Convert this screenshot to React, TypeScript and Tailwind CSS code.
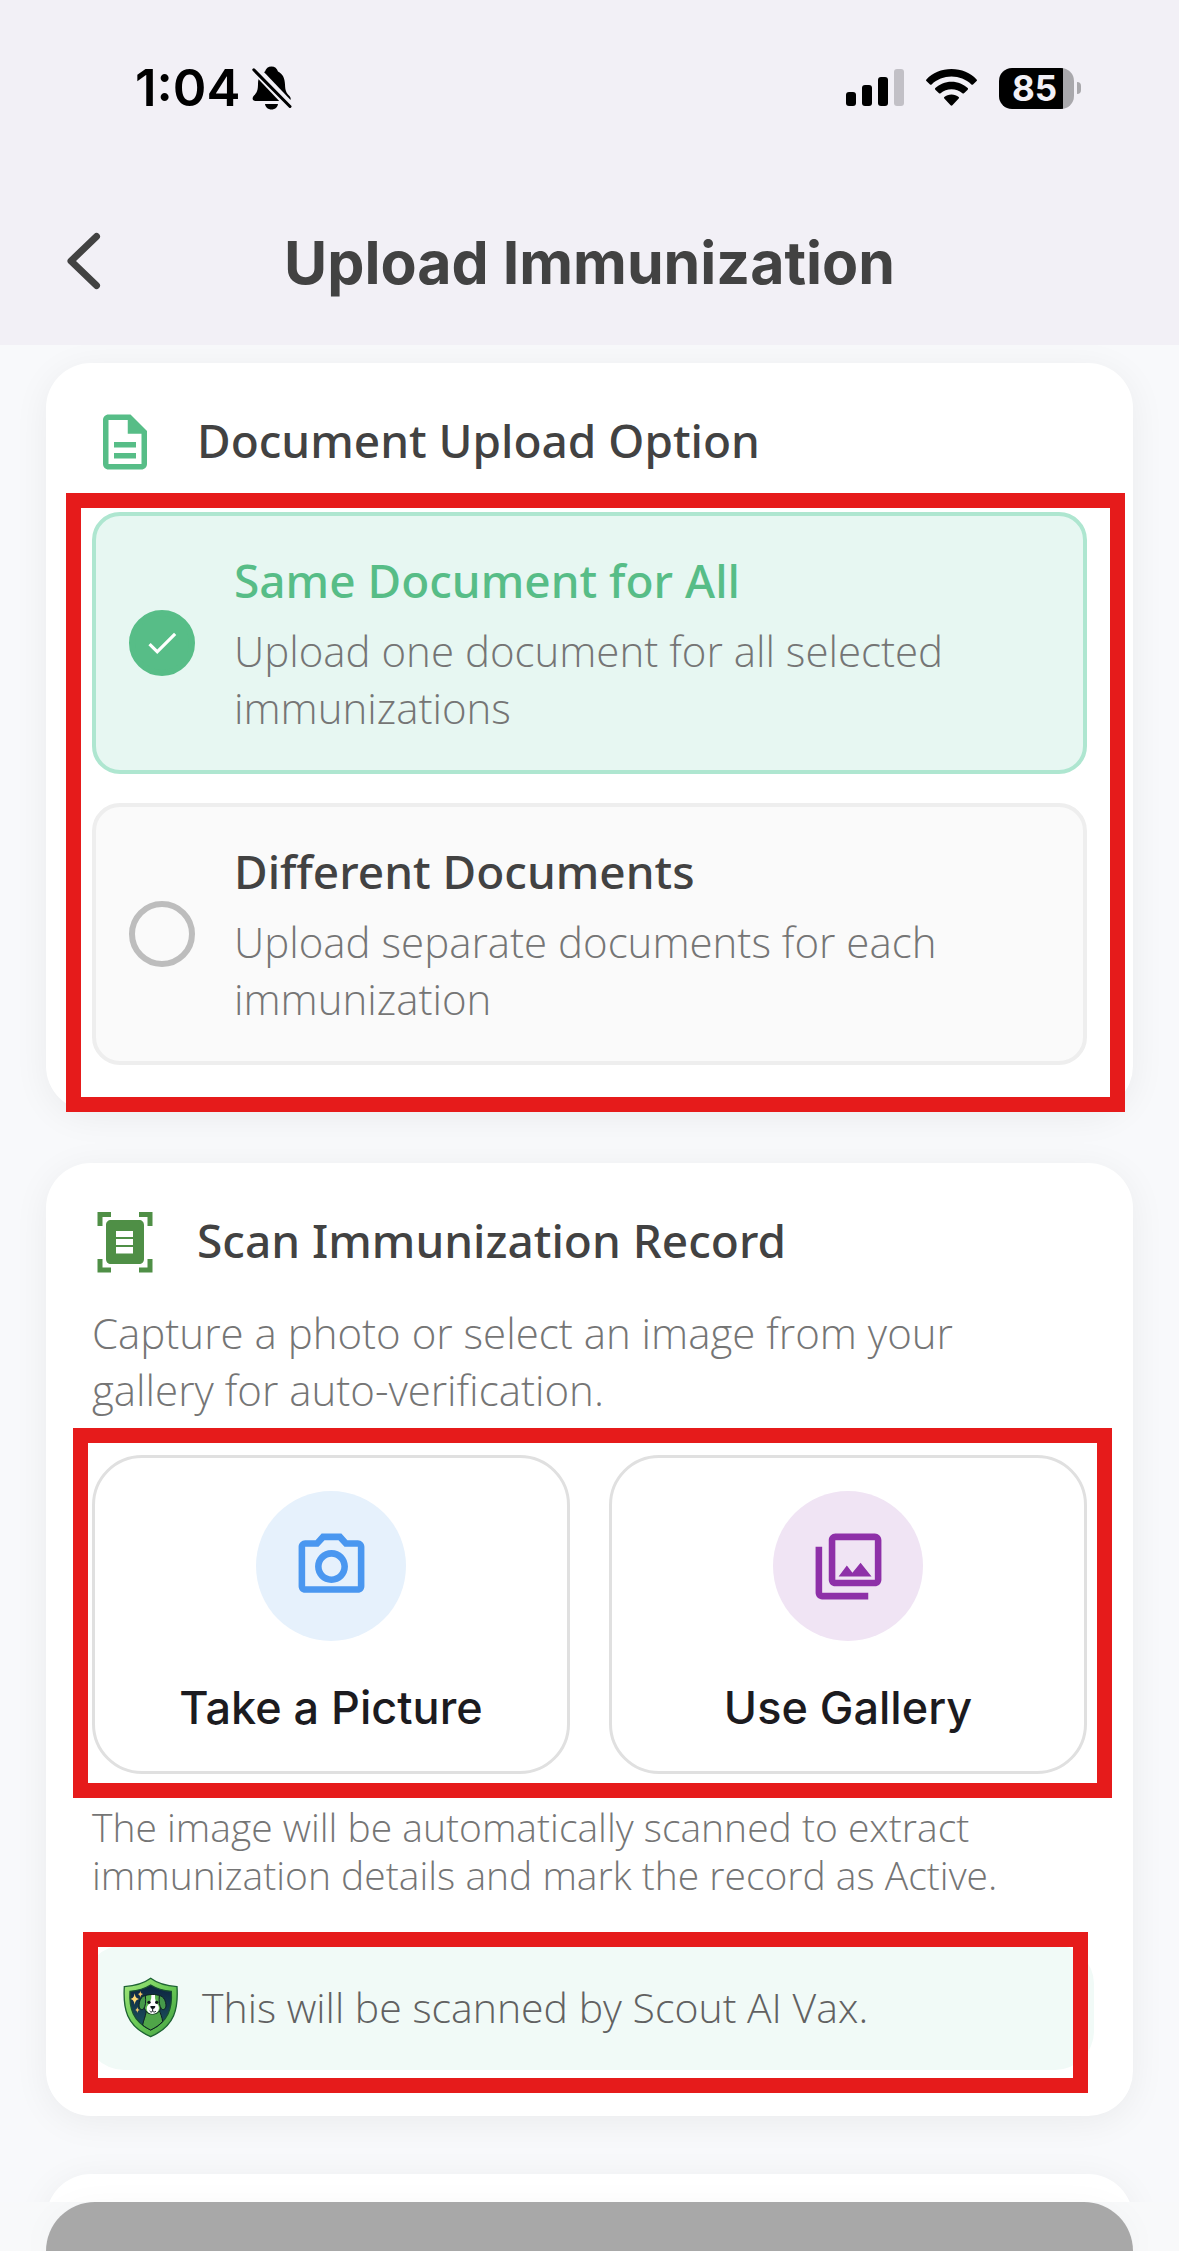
import React, { useState } from 'react'
import {
  MdCheck,
  MdOutlineDescription,
  MdOutlinePhotoCamera,
  MdOutlinePhotoLibrary,
} from 'react-icons/md'

type UploadOption = {
  id: string
  title: string
  description: string
}

const uploadOptions: UploadOption[] = [
  {
    id: 'same',
    title: 'Same Document for All',
    description: 'Upload one document for all selected immunizations',
  },
  {
    id: 'different',
    title: 'Different Documents',
    description: 'Upload separate documents for each immunization',
  },
]

function BellOffIcon() {
  return (
    <svg width="40" height="44" viewBox="0 0 40 44" fill="none" aria-hidden="true">
      <path
        d="M13 5.600C14 2.300 16.200 0.400 19.500 0.400C22.800 0.400 25 2.300 26 5.600C30.800 8 32.800 12.500 33 18.500C33.200 25 34.500 27.200 37.200 29.800C39.600 32.200 39 35 36 35H3.600C0.400 35 -0.400 32 2 29.600C5 26.600 6 24 6 17.500C6.200 12 8.400 8 13 5.600Z"
        fill="#000"
      />
      <path d="M13 38H26C25.500 41.400 23 43.500 19.500 43.500C16 43.500 13.500 41.400 13 38Z" fill="#000" />
      <path d="M0 0L42 44" stroke="#f2f0f6" strokeWidth="9" />
      <path d="M1.800 3.800L38 40.500" stroke="#000" strokeWidth="3" strokeLinecap="round" />
    </svg>
  )
}

function SignalIcon() {
  return (
    <svg width="58" height="38" viewBox="0 0 58 38" aria-hidden="true">
      <rect x="0" y="23" width="10" height="14" rx="3" />
      <rect x="16" y="16" width="10" height="21" rx="3" />
      <rect x="32" y="8" width="10" height="29" rx="3" />
      <rect x="48" y="0" width="10" height="37" rx="3" fill="#c2c0c6" />
    </svg>
  )
}

function WifiIcon() {
  return (
    <svg width="51" height="38" viewBox="0 0 51 38" aria-hidden="true">
      <path d="M25.500 0C35.500 0 44.500 4 50.600 10.400C51.100 10.900 51.100 11.500 50.600 12L47 15.400C46.500 15.900 45.900 15.900 45.400 15.400C40 10.300 33 7.500 25.500 7.500C18 7.500 11 10.300 5.600 15.400C5.100 15.900 4.500 15.900 4 15.400L0.400 12C-0.100 11.500 -0.100 10.900 0.400 10.400C6.500 4 15.500 0 25.500 0Z" />
      <path d="M25.500 12.700C32 12.700 37.500 15.200 41.700 19.100C42.200 19.600 42.200 20.200 41.700 20.700L38 24.200C37.500 24.700 36.900 24.700 36.400 24.200C33.300 21.600 29.600 20.200 25.500 20.200C21.400 20.200 17.700 21.600 14.600 24.200C14.100 24.700 13.500 24.700 13 24.200L9.300 20.700C8.800 20.200 8.800 19.600 9.300 19.100C13.500 15.200 19 12.700 25.500 12.700Z" />
      <path d="M25.500 25.500C28.300 25.500 30.800 26.400 32.700 28C33.200 28.500 33.200 29.100 32.700 29.600L26.400 36.300C25.800 36.900 25.200 36.900 24.600 36.300L18.300 29.600C17.800 29.100 17.800 28.500 18.300 28C20.200 26.400 22.700 25.500 25.500 25.500Z" />
    </svg>
  )
}

function ScanDocumentIcon() {
  return (
    <svg width="66" height="66" viewBox="0 0 66 66" fill="#4f8f46" aria-hidden="true">
      <path d="M5.500 3H19V8H10.500V17H5.500ZM47 3H60.500V17H55.500V8H47ZM5.500 50H10.500V58.500H19V63.500H5.500ZM55.500 50H60.500V63.500H47V58.500H55.500Z" />
      <path
        fillRule="evenodd"
        d="M19 11H47C50 11 52 13 52 16V50C52 53 50 55 47 55H19C16 55 14 53 14 50V16C14 13 16 11 19 11ZM24 22V28H41V22ZM24 30V36H41V30ZM24 38V44.500H41V38Z"
      />
    </svg>
  )
}

function ScoutBadge() {
  return (
    <svg width="60" height="66" viewBox="30 20 180 196" className="shrink-0" aria-hidden="true">
      <defs>
        <linearGradient id="rim" x1="0" y1="0" x2="1" y2="1">
          <stop offset="0" stopColor="#a3e67c" />
          <stop offset="0.5" stopColor="#6ccb57" />
          <stop offset="1" stopColor="#3f9a40" />
        </linearGradient>
        <linearGradient id="sky" x1="0" y1="0" x2="0" y2="1">
          <stop offset="0" stopColor="#0d2340" />
          <stop offset="1" stopColor="#1d5560" />
        </linearGradient>
      </defs>
      <path
        d="M122 29C102 44 74 52 43 54C39 118 48 172 122 204C196 172 205 118 201 54C170 52 142 44 122 29Z"
        fill="url(#rim)"
        stroke="#1e6334"
        strokeWidth="4"
      />
      <path
        d="M122 49C106 59 84 66 60 68C57 118 68 158 122 184C176 158 187 118 184 68C160 66 138 59 122 49Z"
        fill="url(#sky)"
        stroke="#17502f"
        strokeWidth="4"
      />
      <path d="M109 128C106 146 100 156 98 169C106 176 114 180 122 184C136 177 148 170 158 158C156 146 152 134 147 124Z" fill="#4fa548" stroke="#0d1f22" strokeWidth="3" />
      <path d="M104 82C112 76 142 76 150 82C160 90 154 122 146 130C136 138 118 138 110 130C100 120 96 92 104 82Z" fill="#57b34d" stroke="#0d1f22" strokeWidth="3" />
      <path d="M124 79H135C134 92 138 104 145 110C150 122 144 135 128 136C112 135 107 122 112 112C120 104 125 92 124 79Z" fill="#fff" />
      <path d="M106 81C93 82 87 98 87 112C88 122 96 126 101 120C107 112 108 98 106 81Z" fill="#46994a" stroke="#0d1f22" strokeWidth="3" />
      <path d="M148 81C161 82 168 98 168 112C167 122 159 126 154 120C148 112 146 98 148 81Z" fill="#46994a" stroke="#0d1f22" strokeWidth="3" />
      <circle cx="117" cy="101" r="5" fill="#10181c" />
      <circle cx="140" cy="101" r="5" fill="#10181c" />
      <path d="M121 112H136C136 118 132 121 128 121C124 121 121 118 121 112Z" fill="#10181c" />
      <path d="M128 120V127M119 127C122 131 126 131 128 127C131 131 135 131 138 127" fill="none" stroke="#10181c" strokeWidth="3" />
      <path d="M74 74C76 86 79 89 88 91C79 93 76 97 74 108C72 97 69 93 61 91C69 89 72 86 74 74Z" fill="#ffd873" />
      <path d="M91 66C92 73 94 75 100 76C94 78 92 80 91 87C90 80 88 78 83 76C88 75 90 73 91 66Z" fill="#f5c564" />
      <path d="M82 115C83 121 85 123 90 124C85 125 83 127 82 133C81 127 79 125 75 124C79 123 81 121 82 115Z" fill="#f0c86a" />
    </svg>
  )
}

function StatusBar() {
  return (
    <div className="flex items-center justify-between pt-16 pr-[98px] pl-[135px]">
      <div className="flex items-center gap-3 font-[Inter,sans-serif] text-[51px] leading-12 font-semibold text-black">
        <span>1:04</span>
        <BellOffIcon />
      </div>
      <div className="flex items-center">
        <SignalIcon />
        <div className="ml-[22px]">
          <WifiIcon />
        </div>
        <div className="ml-[22px] flex h-[41px] w-[75px] items-center justify-center rounded-[13px] bg-linear-to-r from-black from-85% to-[#a9a8ac] to-85% pr-1 font-[Inter,sans-serif] text-[35px] font-bold text-[#f2f0f6]">
          85
        </div>
        <div className="ml-[3px] h-3 w-1 rounded-r-full bg-[#a9a8ac]" />
      </div>
    </div>
  )
}

function Highlight({ className }: { className: string }) {
  return <div className={`pointer-events-none absolute border-[15px] border-[#e61b1b] ${className}`} />
}

function Card({ children }: { children?: React.ReactNode }) {
  return (
    <section className="rounded-[45px] bg-white p-[46px] shadow-[0_6px_36px_rgba(0,0,0,0.06)]">
      {children}
    </section>
  )
}

function CardTitle({ icon, children }: { icon: React.ReactNode; children: React.ReactNode }) {
  return (
    <div className="flex h-[66px] items-center gap-[39px]">
      {icon}
      <h2 className="pb-1 font-['Noto_Sans',sans-serif] text-[46px] leading-[60px] font-medium text-[#424242]">
        {children}
      </h2>
    </div>
  )
}

function OptionItem(props: { option: UploadOption; checked: boolean; onSelect: () => void }) {
  const { option, checked } = props

  return (
    <label
      className={`flex cursor-pointer items-center gap-[39px] rounded-[28px] border-4 px-[33px] py-[34px] ${
        checked ? 'border-[#aee6d0] bg-[#e7f7f2]' : 'border-[#eeeeee] bg-[#fafafa]'
      }`}
    >
      <span className="relative flex shrink-0">
        <input
          type="radio"
          name="upload-option"
          value={option.id}
          checked={checked}
          onChange={props.onSelect}
          className="size-[66px] appearance-none rounded-full border-6 border-[#bdbdbd] checked:border-[#57bd87] checked:bg-[#57bd87]"
        />
        {checked && <MdCheck className="pointer-events-none absolute inset-0 m-auto text-white" size={38} />}
      </span>
      <span className="flex flex-col gap-3">
        <span
          className={`font-['Noto_Sans',sans-serif] text-[46px] leading-[60px] font-medium ${
            checked ? 'text-[#57bd87]' : 'text-[#424242]'
          }`}
        >
          {option.title}
        </span>
        <span className="text-[42px] leading-[57px] font-light text-[#757575]">{option.description}</span>
      </span>
    </label>
  )
}

function SourceButton({ icon, circle, label }: { icon: React.ReactNode; circle: string; label: string }) {
  return (
    <button
      type="button"
      className="flex cursor-pointer flex-col items-center rounded-[50px] border-3 border-[#e0e0e0] bg-white py-[33px]"
    >
      <span className={`flex size-[150px] items-center justify-center rounded-full ${circle}`}>{icon}</span>
      <span className="mt-[37px] font-[Inter,sans-serif] text-[45px] leading-[60px] font-medium text-[#1c1b1f]">
        {label}
      </span>
    </button>
  )
}

function App() {
  const [selected, setSelected] = useState('same')

  return (
    <div className="flex h-screen flex-col overflow-hidden bg-[#f8f9fb] font-['Open_Sans',sans-serif]">
      <header className="flex h-[345px] shrink-0 flex-col justify-between bg-[#f2f0f6]">
        <StatusBar />
        <div className="relative flex h-[164px] items-center justify-center">
          <button type="button" aria-label="Back" className="absolute left-[63px] cursor-pointer">
            <svg width="42" height="64" viewBox="0 0 42 64" fill="none" aria-hidden="true">
              <path
                d="M33.500 5.500L8 30L33.500 54.500"
                stroke="#424242"
                strokeWidth="7"
                strokeLinecap="round"
                strokeLinejoin="round"
              />
            </svg>
          </button>
          <h1 className="font-[Inter,sans-serif] text-[59px] font-bold text-[#424242]">Upload Immunization</h1>
        </div>
      </header>

      <main className="flex min-h-0 flex-1 flex-col overflow-hidden px-[46px] pt-[18px]">
        <div className="shrink-0">
          <Card>
            <CardTitle icon={<MdOutlineDescription size={66} className="text-[#57bd87]" />}>
              Document Upload Option
            </CardTitle>
            <div className="relative mt-[37px] flex flex-col gap-[29px]">
              {uploadOptions.map((option) => (
                <OptionItem
                  key={option.id}
                  option={option}
                  checked={selected === option.id}
                  onSelect={() => setSelected(option.id)}
                />
              ))}
              <Highlight className="-top-[19px] -right-[38px] -bottom-[47px] -left-[26px]" />
            </div>
          </Card>
        </div>

        <div className="mt-[52px] shrink-0">
          <Card>
            <CardTitle icon={<ScanDocumentIcon />}>Scan Immunization Record</CardTitle>
            <p className="mt-[29px] pr-12 text-[42px] leading-[57px] font-light text-[#757575]">
              Capture a photo or select an image from your gallery for auto-verification.
            </p>
            <div className="relative mt-[37px] grid grid-cols-2 gap-[39px]">
              <SourceButton
                icon={<MdOutlinePhotoCamera size={79} className="text-[#4a97f0]" />}
                circle="bg-[#e6f1fc]"
                label="Take a Picture"
              />
              <SourceButton
                icon={<MdOutlinePhotoLibrary size={79} className="text-[#8e30a8]" />}
                circle="bg-[#f0e4f4]"
                label="Use Gallery"
              />
              <Highlight className="-top-[27px] -right-[25px] -bottom-[24px] -left-[19px]" />
            </div>
            <p className="mt-[29px] text-[39px] leading-[48px] font-light text-[#757575]">
              The image will be automatically scanned to extract immunization details and mark the record as Active.
            </p>
            <div className="relative -mx-[7px] mt-[46px] flex h-[125px] items-center gap-[22px] rounded-[39px] bg-[#f1faf7] px-[35px]">
              <ScoutBadge />
              <span className="text-[41px] font-light text-[#616161]">This will be scanned by Scout AI Vax.</span>
              <Highlight className="-top-[13px] right-[6px] -bottom-[23px] -left-[2px]" />
            </div>
          </Card>
        </div>

        <div className="mt-[58px] shrink-0">
          <Card />
        </div>
      </main>

      <footer className="relative shrink-0 bg-[#f8f9fa] px-[46px]">
        <button
          type="button"
          aria-label="Submit"
          className="block h-[49px] w-full rounded-t-[49px] bg-[#a8a8a8] shadow-[0_6px_36px_rgba(0,0,0,0.04)]"
        />
      </footer>
    </div>
  )
}

export default App
